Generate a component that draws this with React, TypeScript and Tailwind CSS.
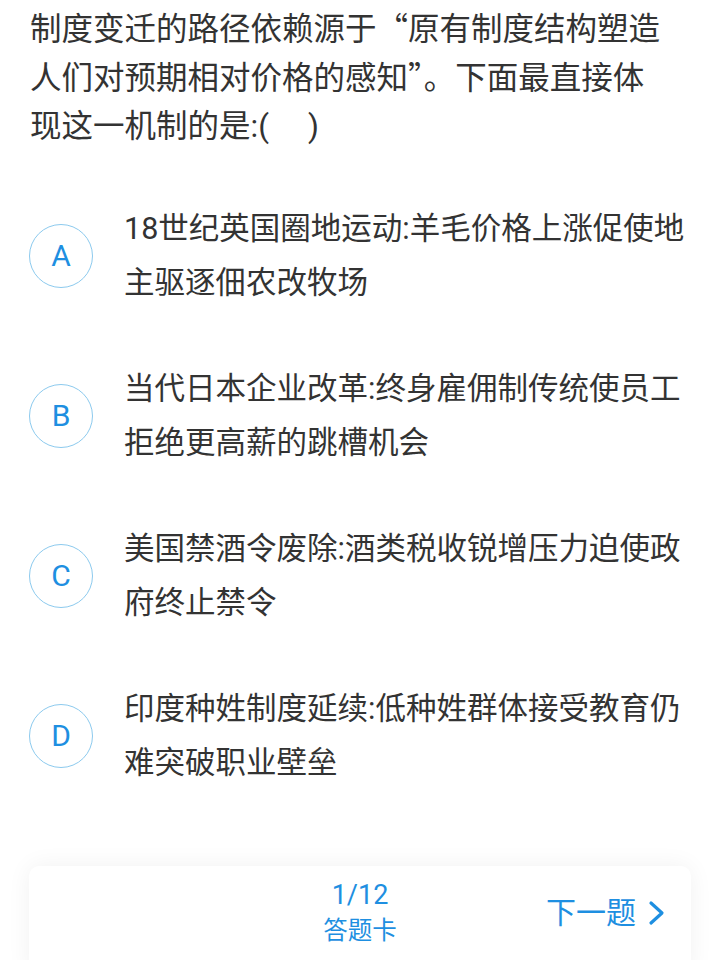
import React from "react";

const options = [
  { k: "A", t: "18世纪英国圈地运动:羊毛价格上涨促使地主驱逐佃农改牧场" },
  { k: "B", t: "当代日本企业改革:终身雇佣制传统使员工拒绝更高薪的跳槽机会" },
  { k: "C", t: "美国禁酒令废除:酒类税收锐增压力迫使政府终止禁令" },
  { k: "D", t: "印度种姓制度延续:低种姓群体接受教育仍难突破职业壁垒" },
];

const cjk = { fontFamily: '"Noto Sans CJK SC", sans-serif' };

export default function App() {
  return (
    <div
      className="w-[720px] h-[960px] bg-white relative overflow-hidden text-[#333333]"
      style={{ fontFamily: 'Roboto, "Noto Sans CJK SC", sans-serif' }}
    >
      <div className="pl-[30px] pr-[50px] pt-[6px] text-[31.5px] leading-[48.5px]">
        制度变迁的路径依赖源于<span className="leading-[0]" style={cjk}>“</span>原有制度结构塑造人们对预期相对价格的感知<span className="leading-[0]" style={cjk}>”</span>。下面最直接体现这一机制的是:(&nbsp;&nbsp;&nbsp;&nbsp;&nbsp;)
      </div>
      <div className="mt-[50px] flex flex-col gap-[52px]">
        {options.map((o) => (
          <div key={o.k} className="flex items-center">
            <div className="ml-[29px] w-[64px] h-[64px] shrink-0 rounded-full border border-[#8ccaee] flex items-center justify-center text-[#1e8fe1] text-[30px]">
              {o.k}
            </div>
            <div className="ml-[31px] mr-[20px] text-[30.5px] leading-[54px]">{o.t}</div>
          </div>
        ))}
      </div>
      <div className="absolute left-[29px] right-[29px] top-[866px] h-[110px] bg-white rounded-[10px] shadow-[0_0_24px_rgba(0,0,0,0.06)] grid grid-cols-3 items-start">
        <div />
        <div className="flex flex-col items-center text-[#1e8fe1] pt-[12px]">
          <div className="text-[27px] leading-[34px]">1/12</div>
          <div className="text-[24.5px] leading-[34px] mt-[2px]">答题卡</div>
        </div>
        <div className="flex justify-end pr-[26px] pt-[28px]">
          <div className="flex items-center gap-[12px] text-[#1e8fe1] text-[30px] leading-[38px]">
            <span>下一题</span>
            <svg width="17" height="26" viewBox="0 0 17 26" fill="none">
              <path d="M3 3 L14 13 L3 23" stroke="#1e8fe1" strokeWidth="3.2" strokeLinecap="round" strokeLinejoin="round" />
            </svg>
          </div>
        </div>
      </div>
    </div>
  );
}
